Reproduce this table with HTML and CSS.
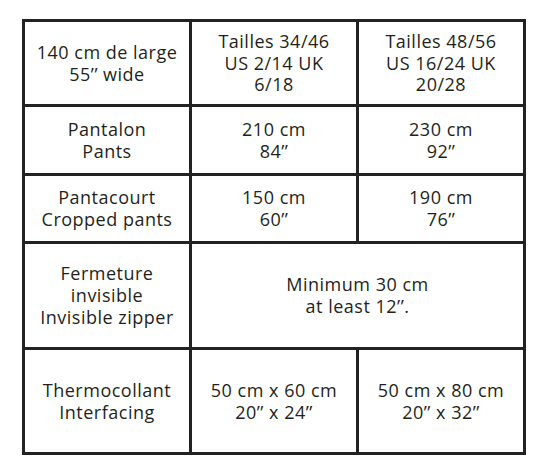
FILE: index.html
```html
<!DOCTYPE html>
<html lang="fr">
<head>
<meta charset="utf-8">
<title>Métrage</title>
<link rel="stylesheet" href="styles.css">
</head>
<body>
<table class="sizes">
  <colgroup><col class="c"><col class="c"><col class="c"></colgroup>
  <tr class="r1">
    <td>140 cm de large<br>55’’ wide</td>
    <td>Tailles 34/46<br>US 2/14 UK<br>6/18</td>
    <td>Tailles 48/56<br>US 16/24 UK<br>20/28</td>
  </tr>
  <tr class="r2">
    <td>Pantalon<br>Pants</td>
    <td>210 cm<br>84’’</td>
    <td>230 cm<br>92’’</td>
  </tr>
  <tr class="r3">
    <td>Pantacourt<br>Cropped pants</td>
    <td>150 cm<br>60’’</td>
    <td>190 cm<br>76’’</td>
  </tr>
  <tr class="r4">
    <td>Fermeture<br>invisible<br>Invisible zipper</td>
    <td colspan="2">Minimum 30 cm<br>at least 12’’.</td>
  </tr>
  <tr class="r5">
    <td>Thermocollant<br>Interfacing</td>
    <td>50 cm x 60 cm<br>20’’ x 24’’</td>
    <td>50 cm x 80 cm<br>20’’ x 32’’</td>
  </tr>
</table>
</body>
</html>
```

FILE: styles.css
```css
html, body {
  margin: 0;
  padding: 0;
  background: #ffffff;
}

body {
  font-family: "Open Sans", "Liberation Sans", sans-serif;
  color: #231f20;
}

.sizes {
  margin: 19px 0 0 22px;
  width: 504px;
  table-layout: fixed;
  border-collapse: separate;
  border-spacing: 3px;
  background: #222222;
}

.sizes .c {
  width: 164px;
}

.sizes td {
  background: #ffffff;
  padding: 1px 0 0;
  text-align: center;
  vertical-align: middle;
  font-size: 18px;
  letter-spacing: 0.5px;
  line-height: 21.7px;
}

.r1 td { height: 81px; }
.r2 td { height: 65px; }
.r3 td { height: 64px; }
.r4 td { height: 102px; }
.r5 td { height: 101px; }
```
